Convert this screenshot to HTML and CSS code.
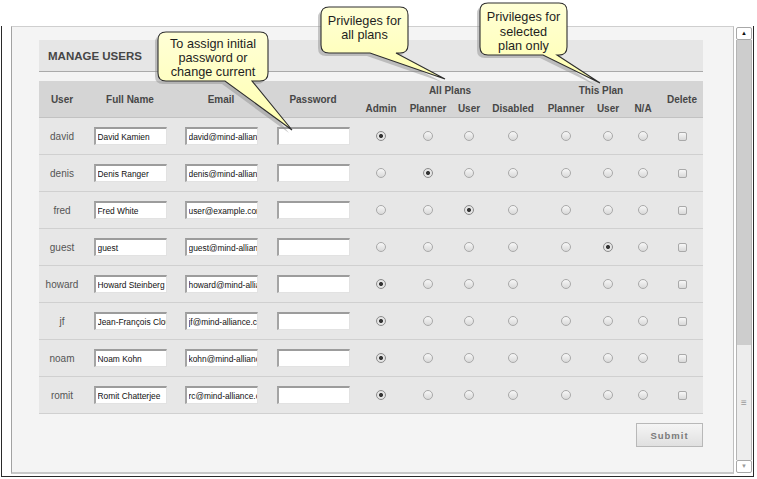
FILE: index.html
```html
<!DOCTYPE html>
<html>
<head>
<meta charset="utf-8">
<link rel="stylesheet" href="styles.css">
</head>
<body>
<div class="frame">
  <div class="viewport">
    <div class="panel-head">MANAGE USERS</div>
    <div class="grid head">
      <div class="h span2 c1">User</div>
      <div class="h span2 c2">Full Name</div>
      <div class="h span2 c3">Email</div>
      <div class="h span2 c4">Password</div>
      <div class="h group g1">All Plans</div>
      <div class="h group g2">This Plan</div>
      <div class="h span2 c12">Delete</div>
      <div class="h sub">Admin</div>
      <div class="h sub">Planner</div>
      <div class="h sub">User</div>
      <div class="h sub">Disabled</div>
      <div class="h sub">Planner</div>
      <div class="h sub">User</div>
      <div class="h sub">N/A</div>
    </div>

    <div class="grid row">
      <span class="uname">david</span>
      <input class="field" type="text" value="David Kamien">
      <input class="field" type="text" value="david@mind-alliance.com">
      <input class="field" type="text" value="">
      <input class="rad" type="radio" name="a1" checked><input class="rad" type="radio" name="a1"><input class="rad" type="radio" name="a1"><input class="rad" type="radio" name="a1">
      <input class="rad" type="radio" name="p1"><input class="rad" type="radio" name="p1"><input class="rad" type="radio" name="p1">
      <input class="chk" type="checkbox">
    </div>
    <div class="grid row">
      <span class="uname">denis</span>
      <input class="field" type="text" value="Denis Ranger">
      <input class="field" type="text" value="denis@mind-alliance.com">
      <input class="field" type="text" value="">
      <input class="rad" type="radio" name="a2"><input class="rad" type="radio" name="a2" checked><input class="rad" type="radio" name="a2"><input class="rad" type="radio" name="a2">
      <input class="rad" type="radio" name="p2"><input class="rad" type="radio" name="p2"><input class="rad" type="radio" name="p2">
      <input class="chk" type="checkbox">
    </div>
    <div class="grid row">
      <span class="uname">fred</span>
      <input class="field" type="text" value="Fred White">
      <input class="field" type="text" value="user@example.com">
      <input class="field" type="text" value="">
      <input class="rad" type="radio" name="a3"><input class="rad" type="radio" name="a3"><input class="rad" type="radio" name="a3" checked><input class="rad" type="radio" name="a3">
      <input class="rad" type="radio" name="p3"><input class="rad" type="radio" name="p3"><input class="rad" type="radio" name="p3">
      <input class="chk" type="checkbox">
    </div>
    <div class="grid row">
      <span class="uname">guest</span>
      <input class="field" type="text" value="guest">
      <input class="field" type="text" value="guest@mind-alliance.com">
      <input class="field" type="text" value="">
      <input class="rad" type="radio" name="a4"><input class="rad" type="radio" name="a4"><input class="rad" type="radio" name="a4"><input class="rad" type="radio" name="a4">
      <input class="rad" type="radio" name="p4"><input class="rad" type="radio" name="p4" checked><input class="rad" type="radio" name="p4">
      <input class="chk" type="checkbox">
    </div>
    <div class="grid row">
      <span class="uname">howard</span>
      <input class="field" type="text" value="Howard Steinberg">
      <input class="field" type="text" value="howard@mind-alliance.com">
      <input class="field" type="text" value="">
      <input class="rad" type="radio" name="a5" checked><input class="rad" type="radio" name="a5"><input class="rad" type="radio" name="a5"><input class="rad" type="radio" name="a5">
      <input class="rad" type="radio" name="p5"><input class="rad" type="radio" name="p5"><input class="rad" type="radio" name="p5">
      <input class="chk" type="checkbox">
    </div>
    <div class="grid row">
      <span class="uname">jf</span>
      <input class="field" type="text" value="Jean-François Cloutier">
      <input class="field" type="text" value="jf@mind-alliance.com">
      <input class="field" type="text" value="">
      <input class="rad" type="radio" name="a6" checked><input class="rad" type="radio" name="a6"><input class="rad" type="radio" name="a6"><input class="rad" type="radio" name="a6">
      <input class="rad" type="radio" name="p6"><input class="rad" type="radio" name="p6"><input class="rad" type="radio" name="p6">
      <input class="chk" type="checkbox">
    </div>
    <div class="grid row">
      <span class="uname">noam</span>
      <input class="field" type="text" value="Noam Kohn">
      <input class="field" type="text" value="kohn@mind-alliance.com">
      <input class="field" type="text" value="">
      <input class="rad" type="radio" name="a7" checked><input class="rad" type="radio" name="a7"><input class="rad" type="radio" name="a7"><input class="rad" type="radio" name="a7">
      <input class="rad" type="radio" name="p7"><input class="rad" type="radio" name="p7"><input class="rad" type="radio" name="p7">
      <input class="chk" type="checkbox">
    </div>
    <div class="grid row">
      <span class="uname">romit</span>
      <input class="field" type="text" value="Romit Chatterjee">
      <input class="field" type="text" value="rc@mind-alliance.com">
      <input class="field" type="text" value="">
      <input class="rad" type="radio" name="a8" checked><input class="rad" type="radio" name="a8"><input class="rad" type="radio" name="a8"><input class="rad" type="radio" name="a8">
      <input class="rad" type="radio" name="p8"><input class="rad" type="radio" name="p8"><input class="rad" type="radio" name="p8">
      <input class="chk" type="checkbox">
    </div>

    <div class="actions"><button class="submit" type="button">Submit</button></div>
  </div>

  <div class="scrollbar">
    <div class="sb-btn up">&#9650;</div>
    <div class="sb-track"></div>
    <div class="sb-thumb">&#8801;</div>
    <div class="sb-btn down">&#9660;</div>
  </div>
</div>

<svg class="bubbles" width="757" height="479" viewBox="0 0 757 479">
  <defs>
    <linearGradient id="yel" x1="0" y1="0" x2="0" y2="1">
      <stop offset="0" stop-color="#ffffd6"/>
      <stop offset="1" stop-color="#ffffb0"/>
    </linearGradient>
  </defs>
  <g class="shadow" transform="translate(-3,3)">
    <path d="M166,32 H260 Q268,32 268,40 V73 Q268,81 260,81 H252 L292,130 L225,81 H166 Q158,81 158,73 V40 Q158,32 166,32 Z"/>
    <path d="M329,7 H400 Q408,7 408,15 V45 Q408,53 400,53 H396 L445,79 L370,53 H329 Q321,53 321,45 V15 Q321,7 329,7 Z"/>
    <path d="M488,3 H559 Q567,3 567,11 V47 Q567,55 559,55 H557 L600,83 L543,55 H488 Q480,55 480,47 V11 Q480,3 488,3 Z"/>
  </g>
  <g class="bubble">
    <path d="M166,32 H260 Q268,32 268,40 V73 Q268,81 260,81 H252 L292,130 L225,81 H166 Q158,81 158,73 V40 Q158,32 166,32 Z"/>
    <path d="M329,7 H400 Q408,7 408,15 V45 Q408,53 400,53 H396 L445,79 L370,53 H329 Q321,53 321,45 V15 Q321,7 329,7 Z"/>
    <path d="M488,3 H559 Q567,3 567,11 V47 Q567,55 559,55 H557 L600,83 L543,55 H488 Q480,55 480,47 V11 Q480,3 488,3 Z"/>
  </g>
</svg>
<div class="tip tip1">To assign initial<br>password or<br>change current</div>
<div class="tip tip2">Privileges for<br>all plans</div>
<div class="tip tip3">Privileges for<br>selected<br>plan only</div>
</body>
</html>
```

FILE: styles.css
```css
* { box-sizing: border-box; }
html, body { margin: 0; padding: 0; }
body {
  width: 757px;
  height: 479px;
  overflow: hidden;
  background: #ffffff;
  padding-top: 26px;
  position: relative;
  font-family: "Liberation Sans", Arial, sans-serif;
}

.frame {
  margin-left: 1px;
  width: 753px;
  height: 451px;
  border-left: 1px solid #2a2a2a;
  border-right: 1px solid #2a2a2a;
  border-bottom: 1px solid #2a2a2a;
  padding: 0 1px 2px 9px;
  display: flex;
  align-items: flex-start;
  background: #ffffff;
}

.viewport {
  width: 723px;
  height: 448px;
  border-left: 1px solid #a2a2a2;
  border-top: 1px solid #cfcfcf;
  border-right: 1px solid #bfbfbf;
  border-bottom: 2px solid #c8c8c8;
  background: #f4f4f4;
  padding: 13px 0 0 27px;
  overflow: hidden;
}

.panel-head {
  width: 664px;
  height: 32px;
  background: #e6e6e6;
  border-bottom: 1px solid #aaaaaa;
  padding-left: 9px;
  line-height: 32px;
  font-weight: bold;
  font-size: 11.5px;
  color: #464646;
  margin-bottom: 9px;
}

.grid {
  width: 664px;
  display: grid;
  grid-template-columns: 46px 90px 92px 92px 44px 50px 32px 56px 50px 34px 36px 42px;
  justify-items: center;
  align-items: center;
}

.head {
  height: 37px;
  grid-template-rows: 18px 18px;
  background: #d5d5d5;
  border-bottom: 1px solid #c2c2c2;
  font-weight: bold;
  font-size: 10px;
  color: #474747;
}
.h { white-space: nowrap; }
.span2 { grid-row: 1 / 3; padding-top: 1px; }
.c1 { grid-column: 1; }
.c2 { grid-column: 2; }
.c3 { grid-column: 3; }
.c4 { grid-column: 4; }
.c12 { grid-column: 12; }
.g1 { grid-column: 5 / 9; grid-row: 1; }
.g2 { grid-column: 9 / 12; grid-row: 1; }
.sub { grid-row: 2; padding-top: 1px; }

.row {
  height: 37px;
  background: #e7e7e7;
  border-bottom: 1px solid #d0d0d0;
}

.uname {
  font-size: 10px;
  color: #555555;
}

.field {
  width: 73px;
  height: 18px;
  margin: 0;
  padding: 0 0 0 2px;
  border-top: 2px solid #9c9c9c;
  border-left: 2px solid #a4a4a4;
  border-right: 1px solid #e2e2e2;
  border-bottom: 1px solid #e2e2e2;
  background: #ffffff;
  font-family: "Liberation Sans", Arial, sans-serif;
  font-size: 8.4px;
  color: #111111;
  outline: none;
}

.rad {
  appearance: none;
  -webkit-appearance: none;
  width: 10px;
  height: 10px;
  margin: 0;
  border-radius: 50%;
  border: 1px solid #a9a9a9;
  background: linear-gradient(#f7f7f7, #d9d9d9);
}
.rad:checked {
  background: radial-gradient(circle, #2f2f2f 0, #3a3a3a 1.6px, #e6e6e6 2.4px, #e0e0e0 100%);
  border-color: #8c8c8c;
}

.chk {
  appearance: none;
  -webkit-appearance: none;
  width: 9px;
  height: 9px;
  margin: 0;
  border-radius: 2px;
  border: 1px solid #a9a9a9;
  background: linear-gradient(#f7f7f7, #d9d9d9);
}

.actions {
  width: 664px;
  display: flex;
  justify-content: flex-end;
  margin-top: 9px;
}
.submit {
  width: 67px;
  height: 24px;
  margin: 0;
  padding: 0;
  border: 1px solid #b8b8b8;
  background: linear-gradient(#f5f5f5, #e0e0e0);
  font-family: "Liberation Sans", Arial, sans-serif;
  font-weight: bold;
  font-size: 9.5px;
  letter-spacing: 1px;
  color: #7a7a7a;
}

.scrollbar {
  margin-left: 2px;
  margin-top: 1px;
  width: 16px;
  height: 446px;
  display: flex;
  flex-direction: column;
}
.sb-btn {
  height: 13px;
  background: #ffffff;
  border: 1px solid #a8a8a8;
  border-radius: 2px;
  font-size: 6px;
  line-height: 11px;
  text-align: center;
}
.sb-btn.up { color: #111111; }
.sb-btn.down { color: #9a9a9a; }
.sb-track {
  height: 305px;
  background: #cdcdcd;
  border-left: 1px solid #b5b5b5;
  border-right: 1px solid #b5b5b5;
}
.sb-thumb {
  flex: 1;
  background: #ededed;
  border-left: 1px solid #b5b5b5;
  border-right: 1px solid #b5b5b5;
  color: #9a9a9a;
  font-size: 10px;
  display: flex;
  align-items: center;
  justify-content: center;
}

.bubbles {
  position: absolute;
  left: 0;
  top: 0;
  pointer-events: none;
}
.shadow path { fill: #8a8a8a; opacity: 0.45; }
.bubble path { fill: url(#yel); stroke: #2e2e2e; stroke-width: 1.1; }

.tip {
  position: absolute;
  text-align: center;
  font-family: "Liberation Sans", Arial, sans-serif;
  font-size: 12.7px;
  line-height: 14px;
  color: #1e1e1e;
  white-space: nowrap;
}
.tip1 { left: 158px; top: 37px; width: 110px; }
.tip2 { left: 321px; top: 14px; width: 87px; }
.tip3 { left: 480px; top: 10px; width: 87px; line-height: 14.5px; }
```
